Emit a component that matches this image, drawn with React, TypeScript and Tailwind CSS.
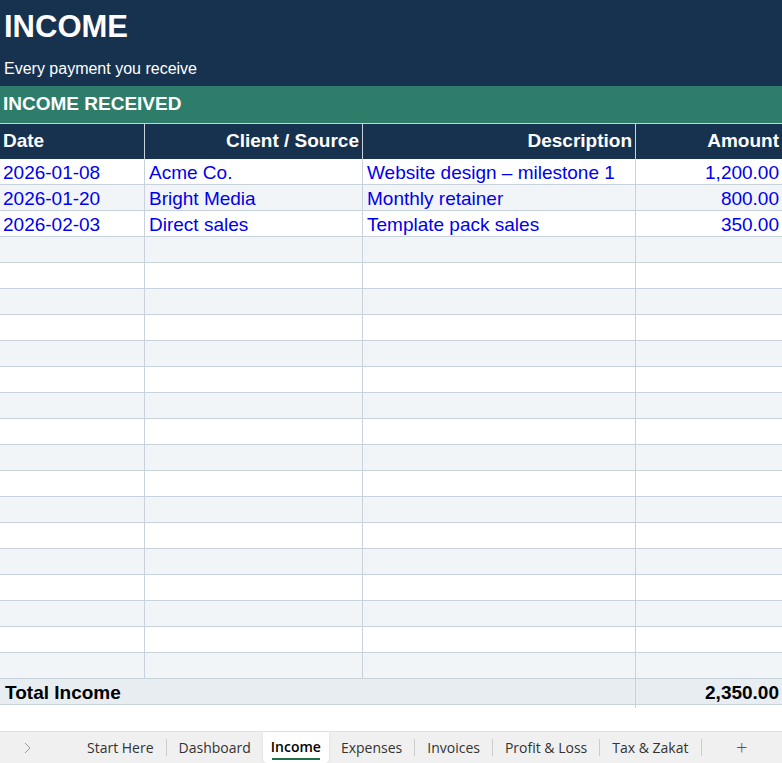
import React from "react";

const rows = [
  ["2026-01-08", "Acme Co.", "Website design – milestone 1", "1,200.00"],
  ["2026-01-20", "Bright Media", "Monthly retainer", "800.00"],
  ["2026-02-03", "Direct sales", "Template pack sales", "350.00"],
];
const all = Array.from({ length: 20 }, (_, i) => rows[i] || ["", "", "", ""]);
const cols = "grid grid-cols-[145px_218px_273px_146px]";

export default function App() {
  return (
    <div className="w-[782px] h-[763px] bg-white flex flex-col overflow-hidden" style={{ fontFamily: '"Liberation Sans", Arial, sans-serif' }}>
      <div className="bg-[#17324f] h-[86px] text-white px-[4px] flex flex-col">
        <div className="text-[31px] font-bold leading-none pt-[11px]">INCOME</div>
        <div className="text-[16px] mt-auto mb-[5px]">Every payment you receive</div>
      </div>
      <div className="bg-[#2e7d6b] h-[38px] border-b border-[#c8d2dc] text-white text-[19px] font-bold px-[3px] flex items-center">INCOME RECEIVED</div>
      <div className={`${cols} bg-[#17324f] text-white text-[19px] font-bold h-[35px]`}>
        <div className="px-[3px] flex items-center border-r border-[#c8d2dc]">Date</div>
        <div className="px-[3px] flex items-center justify-end border-r border-[#c8d2dc]">Client / Source</div>
        <div className="px-[3px] flex items-center justify-end border-r border-[#c8d2dc]">Description</div>
        <div className="px-[3px] flex items-center justify-end">Amount</div>
      </div>
      {all.map((r, i) => (
        <div key={i} className={`${cols} h-[26px] text-[19px] text-[#0000ee] border-b border-[#c8d2dc] ${i % 2 ? "bg-[#f2f5f8]" : "bg-white"}`}>
          <div className="px-[3px] flex items-center border-r border-[#c8d2dc]">{r[0]}</div>
          <div className="px-[4px] flex items-center border-r border-[#c8d2dc]">{r[1]}</div>
          <div className="px-[4px] flex items-center border-r border-[#c8d2dc]">{r[2]}</div>
          <div className="px-[3px] flex items-center justify-end">{r[3]}</div>
        </div>
      ))}
      <div className="grid grid-cols-[636px_146px] h-[26px] bg-[#e8edf2] border-b border-[#c8d2dc] text-[19px] font-bold text-black">
        <div className="px-[5px] flex items-center border-r border-[#c8d2dc]">Total Income</div>
        <div className="px-[3px] flex items-center justify-end">2,350.00</div>
      </div>
      <div className="h-[26px]" />
      <div className="flex-1 bg-[#f0f0f0] border-t border-[#e0e0e0] flex items-stretch text-[14px] text-[#333]" style={{ fontFamily: '"Open Sans", sans-serif' }}>
        <div className="w-[75px] flex items-center justify-start pl-[23px] text-[#999]">
          <svg width="8" height="12" viewBox="0 0 8 12"><path d="M2 1l5 5-5 5" fill="none" stroke="#999" strokeWidth="1" /></svg>
        </div>
        {["Start Here", "Dashboard", "Income", "Expenses", "Invoices", "Profit & Loss", "Tax & Zakat"].map((t) => (
          <React.Fragment key={t}>
            {t === "Income" ? (
              <div className="bg-white px-[8px] flex flex-col items-center justify-center rounded-b-[4px] shadow-sm">
                <span className="font-semibold text-black">{t}</span>
                <span className="h-[2px] w-[48px] bg-[#1e7145] mt-[1px]" />
              </div>
            ) : (
              <div className="px-[12px] flex items-center">{t}</div>
            )}
            {t !== "Dashboard" && t !== "Income" && <div className="w-px bg-[#ccc] my-[7px]" />}
          </React.Fragment>
        ))}
        <div className="flex-1 flex items-center justify-center text-[20px] font-light text-[#555]">+</div>
      </div>
    </div>
  );
}
